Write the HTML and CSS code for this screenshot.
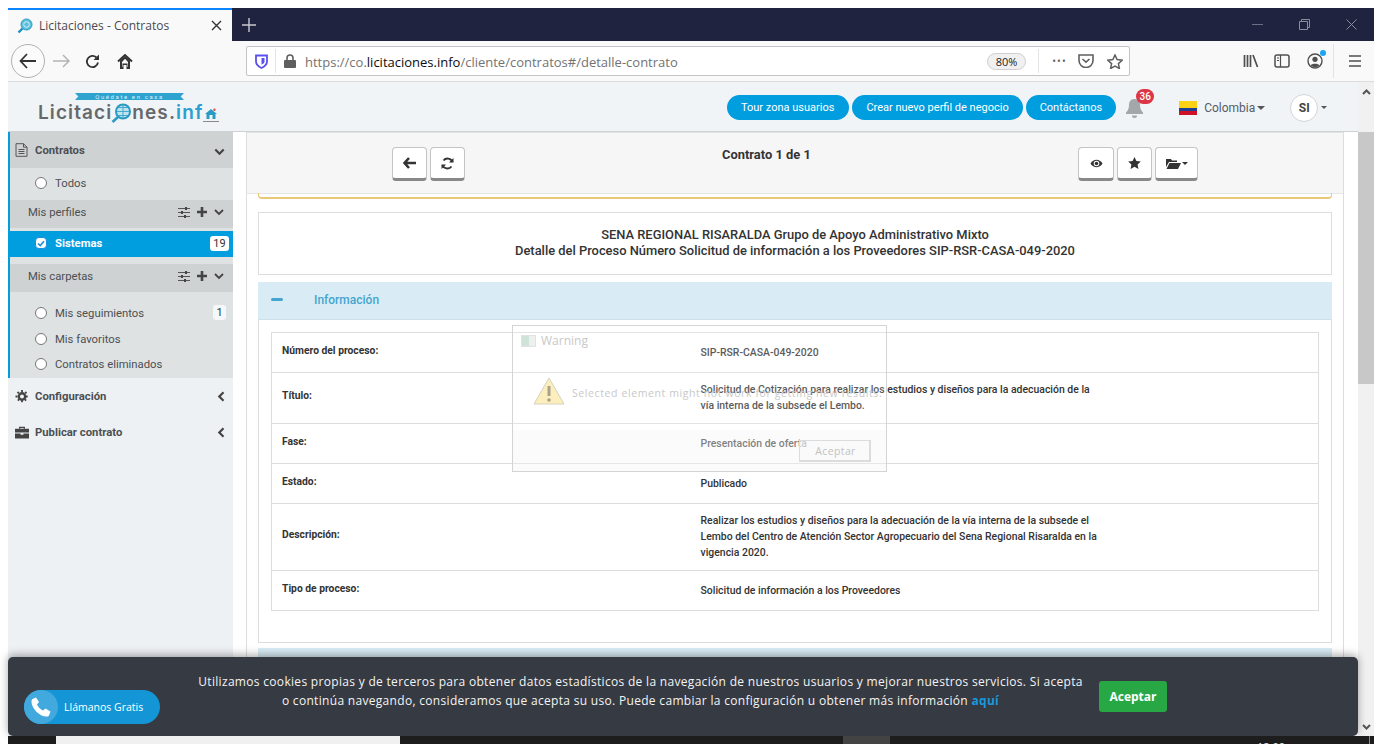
FILE: index.html
```html
<!DOCTYPE html>
<html lang="es">
<head>
  <meta charset="UTF-8" />
  <title>Licitaciones - Contratos</title>
  <link rel="stylesheet" href="styles.css">
</head>
<body>
<div class="window">

  <!-- browser tabs -->
  <div class="tabstrip">
    <div class="tab">
      <svg class="favicon" width="16" height="16" viewBox="0 0 16 16"><circle cx="9.500" cy="6.500" r="5.500" fill="#5cc0dc" stroke="#2a9cc4"/><circle cx="9.500" cy="6.500" r="2.800" fill="none" stroke="#d6f1f8"/><path d="M5.500 10.500 1.500 14.500" stroke="#1f8fc0" stroke-width="2.400"/></svg>
      <span class="tab-title">Licitaciones - Contratos</span>
      <svg class="tab-close" width="11" height="11" viewBox="0 0 11 11"><path d="M1 1l9 9M10 1l-9 9" stroke="#333" stroke-width="1.400" fill="none"/></svg>
    </div>
    <svg class="newtab" width="14" height="14" viewBox="0 0 14 14"><path d="M7 0v14M0 7h14" stroke="#c9c9d0" stroke-width="1.400"/></svg>
    <div class="winctl">
      <svg width="11" height="11" viewBox="0 0 11 11"><path d="M0 5.500h11" stroke="#6b6f85"/></svg>
      <svg width="11" height="11" viewBox="0 0 11 11"><path d="M.5 2.500h8v8h-8zM2.500 2.500v-2h8v8h-2" stroke="#8a8da0" fill="none"/></svg>
      <svg width="11" height="11" viewBox="0 0 11 11"><path d="M.5.500l10 10M10.500.500l-10 10" stroke="#8a8da0" fill="none"/></svg>
    </div>
  </div>

  <!-- browser toolbar -->
  <div class="toolbar">
    <div class="nav-btns">
      <span class="back-btn">
        <svg width="18" height="16" viewBox="0 0 18 16"><path d="M8 1 1.500 8 8 15M2 8h15" stroke="#333" stroke-width="1.800" fill="none"/></svg>
      </span>
      <svg class="fwd" width="17" height="14" viewBox="0 0 17 14"><path d="M10 1l6 6-6 6M16 7H0" stroke="#b4b4b4" stroke-width="1.500" fill="none"/></svg>
      <svg class="reload" width="15" height="15" viewBox="0 0 15 15"><path d="M13 8.500A5.600 5.600 0 1 1 11.400 3.500" stroke="#333" stroke-width="1.800" fill="none"/><path d="M14 0.500v5.500H8.500z" fill="#333"/></svg>
      <svg class="home" width="16" height="15" viewBox="0 0 16 15"><path d="M1 7.500 8 1l7 6.500" stroke="#333" stroke-width="1.900" fill="none"/><path d="M3 6.500 8 2l5 4.500V15H9.500v-4h-3v4H3zM5 8v5h.5V9.500h5V13h.5V8L8 4.800z" fill="#333" fill-rule="evenodd"/></svg>
    </div>
    <div class="urlbar">
      <svg class="shield" width="13" height="15" viewBox="0 0 13 15"><path d="M1 1.500h11v6c0 3-2.500 5-5.500 6.500C3.500 12.500 1 10.500 1 7.500z" fill="none" stroke="#5a4ff0" stroke-width="1.800"/><path d="M6.500 4H9.500v3.500c0 1.500-1.500 2.500-3 3.200z" fill="#5a4ff0"/></svg>
      <span class="url-sep"></span>
      <svg class="lock" width="12" height="14" viewBox="0 0 12 14"><path d="M3 6V4a3 3 0 0 1 6 0v2" stroke="#5f5f60" stroke-width="1.600" fill="none"/><rect y="6" width="12" height="8" rx="1" fill="#5f5f60"/></svg>
      <span class="url">https://co.<b>licitaciones.info</b>/cliente/contratos#/detalle-contrato</span>
      <span class="zoom-pill">80%</span>
      <span class="url-sep sep-right"></span>
      <span class="dots">•••</span>
      <svg class="pocket" width="16" height="14" viewBox="0 0 16 14"><path d="M1 1h14v5.500a7 7 0 0 1-14 0z" stroke="#5f5f60" stroke-width="1.600" fill="none"/><path d="M4.500 5 8 8.200 11.500 5" stroke="#5f5f60" stroke-width="1.600" fill="none"/></svg>
      <svg class="star-o" width="16" height="15" viewBox="0 0 16 15"><path d="M8 1l2.100 4.600 5 .6-3.700 3.400 1 4.900L8 12.100l-4.400 2.400 1-4.900L.9 6.200l5-.6z" stroke="#5f5f60" stroke-width="1.500" fill="none"/></svg>
    </div>
    <div class="tools">
      <svg width="16" height="14" viewBox="0 0 16 14"><path d="M1.500 1v12M4.500 1v12M7.500 1v12M10 1l4.500 12" stroke="#4f4f50" stroke-width="1.700" fill="none"/></svg>
      <svg width="16" height="14" viewBox="0 0 16 14"><rect x="1" y="1" width="14" height="12" rx="2" stroke="#4f4f50" stroke-width="1.500" fill="none"/><path d="M6.500 1v12M3 4h2M3 6.500h2" stroke="#4f4f50" stroke-width="1.200"/></svg>
      <span class="account">
        <svg width="16" height="16" viewBox="0 0 16 16"><circle cx="8" cy="8" r="7" stroke="#4f4f50" stroke-width="1.400" fill="none"/><circle cx="8" cy="6.300" r="2.600" fill="#4f4f50"/><path d="M3.500 12.500c1-2.500 8-2.500 9 0a7 7 0 0 1-9 0z" fill="#4f4f50"/></svg>
        <i class="account-dot"></i>
      </span>
      <span class="tool-sep"></span>
      <svg class="burger" width="12" height="12" viewBox="0 0 12 12"><path d="M0 1h12M0 6h12M0 11h12" stroke="#4f4f50" stroke-width="1.600"/></svg>
    </div>
  </div>

  <div class="page">
    <div class="page-content">

      <header class="site-header">
        <a class="logo">
          <span class="logo-ribbon">Quédate en casa</span>
          <span class="logo-name">Licitaci<svg class="logo-globe" width="22" height="21" viewBox="0 0 22 21"><circle cx="13" cy="8.500" r="7" fill="#bfe4f0" stroke="#2a9cc4" stroke-width="2"/><path d="M6 8.500h14M13 1.500v14M8 4.500h10M8 12.500h10" stroke="#2a9cc4" stroke-width=".8"/><path d="M8 14 2.500 19" stroke="#2a9cc4" stroke-width="2.600"/></svg>nes.<em>inf</em><svg class="logo-house" width="16" height="14" viewBox="0 0 16 14"><path d="M8 1 2 6h1.500v5h9V6H14z" fill="#2a9cc4"/><rect x="6.500" y="7" width="3" height="4" fill="#f1f4f6"/><path d="M0 13.500h16" stroke="#8a8a8a"/><circle cx="11.500" cy="1.800" r="1.200" fill="#d9534f"/></svg></span>
        </a>
        <nav class="header-links">
          <a class="pill">Tour zona usuarios</a>
          <a class="pill">Crear nuevo perfil de negocio</a>
          <a class="pill">Contáctanos</a>
        </nav>
        <span class="bell">
          <svg width="19" height="20" viewBox="0 0 19 20"><path d="M9.500 1c-4 0-5.500 3-5.500 6 0 4-1.500 6-3 7.500v1.500h17v-1.500C16.500 13 15 11 15 7c0-3-1.500-6-5.500-6zM7 17.500a2.500 2.500 0 0 0 5 0z" fill="#a3a7a9"/></svg>
          <span class="bell-count">36</span>
        </span>
        <span class="flag"><i></i></span>
        <span class="country">Colombia</span>
        <i class="caret"></i>
        <span class="avatar">SI</span>
        <i class="caret caret-small"></i>
      </header>

      <div class="page-body">
        <aside class="sidebar">
          <div class="menu-open">
            <div class="menu-head">
              <svg class="menu-icon" width="13" height="14" viewBox="0 0 13 14"><path d="M1 .7h7.500L12 4.200v9.100H1zM8.500.7v3.500H12M3.500 6.500h6M3.500 8.500h6M3.500 10.500h6" stroke="#555" fill="none"/></svg>
              <span>Contratos</span>
              <svg class="chev" width="11" height="8" viewBox="0 0 11 8"><path d="M1.300 1.500 5.500 5.700 9.700 1.500" stroke="#444" stroke-width="2.200" fill="none"/></svg>
            </div>
            <div class="menu-item item-todos"><i class="radio"></i>Todos</div>
            <div class="sub-head">
              <span>Mis perfiles</span>
              <span class="sub-actions">
                <svg width="12" height="11" viewBox="0 0 12 11"><path d="M0 1.500h12M0 5.500h12M0 9.500h12" stroke="#555" stroke-width="1"/><path d="M7 0h2v3H7zM3 4h2v3H3zM6 8h2v3H6z" fill="#444"/></svg>
                <svg width="10" height="10" viewBox="0 0 10 10"><path d="M5 0v10M0 5h10" stroke="#444" stroke-width="2.600"/></svg>
                <svg width="10" height="7" viewBox="0 0 10 7"><path d="M1 1l4 4 4-4" stroke="#444" stroke-width="1.800" fill="none"/></svg>
              </span>
            </div>
            <div class="menu-item item-active">
              <i class="radio radio-on"><svg width="8" height="7" viewBox="0 0 8 7"><path d="M1 3.500 3.200 5.500 7 1.200" stroke="#1a8fdc" stroke-width="1.600" fill="none"/></svg></i>Sistemas<span class="count">19</span>
            </div>
            <div class="sub-head sub-carpetas">
              <span>Mis carpetas</span>
              <span class="sub-actions">
                <svg width="12" height="11" viewBox="0 0 12 11"><path d="M0 1.500h12M0 5.500h12M0 9.500h12" stroke="#555" stroke-width="1"/><path d="M7 0h2v3H7zM3 4h2v3H3zM6 8h2v3H6z" fill="#444"/></svg>
                <svg width="10" height="10" viewBox="0 0 10 10"><path d="M5 0v10M0 5h10" stroke="#444" stroke-width="2.600"/></svg>
                <svg width="10" height="7" viewBox="0 0 10 7"><path d="M1 1l4 4 4-4" stroke="#444" stroke-width="1.800" fill="none"/></svg>
              </span>
            </div>
            <div class="folder-list">
              <div class="menu-item"><i class="radio"></i>Mis seguimientos<span class="count count-light">1</span></div>
              <div class="menu-item"><i class="radio"></i>Mis favoritos</div>
              <div class="menu-item"><i class="radio"></i>Contratos eliminados</div>
            </div>
          </div>
          <div class="menu-closed">
            <svg class="menu-icon" width="13" height="13" viewBox="0 0 13 13"><circle cx="6.500" cy="6.500" r="3.200" fill="none" stroke="#444" stroke-width="2.400"/><path d="M6.500 0v13M0 6.500h13M2 2l9 9M11 2l-9 9" stroke="#444" stroke-width="1.800" stroke-dasharray="2 8.200"/></svg>
            <span>Configuración</span>
            <svg class="chev-left" width="8" height="11" viewBox="0 0 8 11"><path d="M6.500 1.300 2.300 5.500 6.500 9.700" stroke="#444" stroke-width="2.200" fill="none"/></svg>
          </div>
          <div class="menu-closed">
            <svg class="menu-icon" width="15" height="13" viewBox="0 0 15 13"><path d="M5 2.500V1h5v1.500" stroke="#444" stroke-width="1.400" fill="none"/><path d="M0 2.500h15V6.500H0zM0 7.500h6v1.500h3V7.500h6V13H0z" fill="#444"/></svg>
            <span>Publicar contrato</span>
            <svg class="chev-left" width="8" height="11" viewBox="0 0 8 11"><path d="M6.500 1.300 2.300 5.500 6.500 9.700" stroke="#444" stroke-width="2.200" fill="none"/></svg>
          </div>
        </aside>

        <main class="main">
          <div class="detail">
            <div class="detail-bar">
              <div class="btn-group">
                <button class="bar-btn"><svg width="13" height="12" viewBox="0 0 13 12"><path d="M6 1 1.500 6 6 11M2 6h11" stroke="#333" stroke-width="2.600" fill="none"/></svg></button>
                <button class="bar-btn"><svg width="13" height="13" viewBox="0 0 13 13"><path d="M11.500 5A5.200 5.200 0 0 0 2.500 3.500M1.500 8a5.200 5.200 0 0 0 9 1.500" stroke="#333" stroke-width="1.900" fill="none"/><path d="M12.500 1v4.500H8zM.5 12V7.500H5z" fill="#333"/></svg></button>
              </div>
              <strong class="bar-title">Contrato 1 de 1</strong>
              <div class="btn-group bar-right">
                <button class="bar-btn btn-eye"><svg width="13" height="9" viewBox="0 0 13 9"><path d="M.5 4.500C3.500-.5 9.500-.5 12.500 4.500 9.500 9.500 3.500 9.500.5 4.500z" fill="#333"/><circle cx="6.500" cy="4.500" r="2.800" fill="#fff"/><circle cx="6.500" cy="4.500" r="1.800" fill="#333"/></svg></button>
                <button class="bar-btn"><svg width="13" height="12" viewBox="0 0 13 12"><path d="M6.500 0l1.900 4 4.400.5-3.200 3 .8 4.400-3.900-2.100-3.900 2.100.8-4.400-3.200-3 4.400-.5z" fill="#333"/></svg></button>
                <button class="bar-btn btn-folder"><svg width="15" height="11" viewBox="0 0 15 11"><path d="M0 1h5l1 1.500h5V4H3L0 9z" fill="#333"/><path d="M3.500 5H15l-3 6H.5z" fill="#333"/></svg><i class="caret caret-dark"></i></button>
              </div>
            </div>
            <div class="alert-end"></div>

            <div class="title-box">
              <p>SENA REGIONAL RISARALDA Grupo de Apoyo Administrativo Mixto</p>
              <p>Detalle del Proceso Número Solicitud de información a los Proveedores SIP-RSR-CASA-049-2020</p>
            </div>

            <section class="accordion">
              <div class="acc-head"><i class="acc-minus"></i><span>Información</span></div>
              <div class="acc-body">
                <table class="info-table">
                  <tr class="row-1"><th>Número del proceso:</th><td>SIP-RSR-CASA-049-2020</td></tr>
                  <tr class="row-2"><th>Título:</th><td>Solicitud de Cotización para realizar los estudios y diseños para la adecuación de la vía interna de la subsede el Lembo.</td></tr>
                  <tr class="row-1"><th>Fase:</th><td>Presentación de oferta</td></tr>
                  <tr class="row-1"><th>Estado:</th><td>Publicado</td></tr>
                  <tr class="row-3"><th>Descripción:</th><td>Realizar los estudios y diseños para la adecuación de la vía interna de la subsede el Lembo del Centro de Atención Sector Agropecuario del Sena Regional Risaralda en la vigencia 2020.</td></tr>
                  <tr class="row-1"><th>Tipo de proceso:</th><td>Solicitud de información a los Proveedores</td></tr>
                </table>
              </div>
            </section>
            <div class="acc-head acc-next"></div>
          </div>
        </main>
      </div>
    </div>

    <div class="scrollbar">
      <svg width="9" height="6" viewBox="0 0 9 6"><path d="M1 5l3.500-3.500L8 5" stroke="#555" stroke-width="2" fill="none"/></svg>
      <div class="scroll-thumb"></div>
      <svg class="scroll-down" width="9" height="6" viewBox="0 0 9 6"><path d="M1 1l3.500 3.500L8 1" stroke="#555" stroke-width="2" fill="none"/></svg>
    </div>

    <!-- fading warning dialog -->
    <div class="warning">
      <div class="warning-title"><i class="warning-appicon"></i>Warning</div>
      <div class="warning-msg">
        <svg width="32" height="28" viewBox="0 0 32 28"><path d="M16 1 31 27H1z" fill="#fbe9a8" stroke="#c8c2a8"/><path d="M16 9v10" stroke="#8b8468" stroke-width="3"/><circle cx="16" cy="23" r="1.800" fill="#8b8468"/></svg>
        <span>Selected element might not work for getting new results.</span>
      </div>
      <div class="warning-foot"><button class="warning-btn">Aceptar</button></div>
    </div>

    <!-- cookie notice -->
    <div class="cookies">
      <p>Utilizamos cookies propias y de terceros para obtener datos estadísticos de la navegación de nuestros usuarios y mejorar nuestros servicios. Si acepta<br>o continúa navegando, consideramos que acepta su uso. Puede cambiar la configuración u obtener más información <a>aquí</a></p>
      <button class="cookie-ok">Aceptar</button>
    </div>
    <a class="call-pill">
      <span class="call-circle"><svg width="20" height="20" viewBox="0 0 20 20"><path d="M5 0.500 8 5 6 7.500c1 2.500 3.500 5 6 6l2.500-2 5 3-1.500 4c-.5 1-1.500 1-2.500 1C8.500 19.500.5 11.500.5 4.500c0-1 .5-2 1-2.500z" fill="#fff"/></svg></span>
      Llámanos Gratis
    </a>
  </div>

  <div class="taskbar">
    <span class="task-app"></span>
    <span class="task-active"></span>
    <span class="task-clock">12:00</span>
    <span class="task-edge"></span>
  </div>
</div>
</body>
</html>
```

FILE: styles.css
```css
* {
  box-sizing: border-box;
}

html, body {
  height: 744px;
  overflow: hidden;
}

body {
  margin: 0;
  padding: 8px 8px 0;
  background: #fff;
  font-family: Roboto, 'Liberation Sans', sans-serif;
  color: #333;
}

svg {
  display: block;
  flex: none;
}

.window {
  width: 1366px;
  height: 736px;
  display: flex;
  flex-direction: column;
}

/* Browser chrome */
.tabstrip {
  height: 33px;
  background: #20233f;
  display: flex;
  align-items: center;
  flex: none;
}

.tab {
  width: 224px;
  height: 33px;
  background: #f9f9fa;
  border-top: 2px solid #0a84ff;
  display: flex;
  align-items: center;
  padding: 0 10px 0 9px;
  font-family: 'Open Sans', sans-serif;
  font-size: 12px;
  color: #4a4a4f;
}

.tab-title {
  margin-left: 6px;
  flex: 1;
}

.newtab {
  margin-left: 10px;
}

.winctl {
  margin-left: auto;
  display: flex;
  gap: 36px;
  padding-right: 17px;
}

.toolbar {
  height: 41px;
  background: #f9f9fa;
  border-bottom: 1px solid #dcdcde;
  display: flex;
  align-items: center;
  flex: none;
}

.nav-btns {
  width: 238px;
  display: flex;
  align-items: center;
  padding-left: 3px;
}

.back-btn {
  width: 34px;
  height: 34px;
  border: 1px solid #b1b1b3;
  border-radius: 50%;
  background: #fbfbfb;
  display: flex;
  align-items: center;
  justify-content: center;
}

.fwd {
  margin-left: 8px;
}

.reload {
  margin-left: 15px;
}

.home {
  margin-left: 17px;
}

.urlbar {
  width: 884px;
  height: 30px;
  background: #fff;
  border: 1px solid #c4c4c6;
  border-radius: 2px;
  display: flex;
  align-items: center;
  padding-left: 8px;
  font-family: 'Open Sans', sans-serif;
  font-size: 13px;
  color: #737373;
}

.url-sep {
  width: 1px;
  height: 24px;
  background: #e4e4e5;
  margin: 0 8px 0 7px;
}

.url {
  margin-left: 9px;
  padding-top: 1px;
  flex: 1;
  white-space: nowrap;
}

.url b {
  font-weight: 400;
  color: #0c0c0d;
}

.zoom-pill {
  width: 39px;
  height: 17px;
  margin-left: -1px;
  border: 1px solid #cfcfd1;
  border-radius: 9px;
  background: #f0f0f1;
  font-size: 11px;
  line-height: 15px;
  text-align: center;
  color: #222;
}

.sep-right {
  margin: 0 12px;
}

.dots {
  font-size: 10px;
  letter-spacing: 1px;
  color: #5f5f60;
  width: 17px;
  text-align: center;
}

.pocket {
  margin-left: 10px;
}

.star-o {
  margin: 0 6px 0 13px;
}

.tools {
  flex: 1;
  display: flex;
  align-items: center;
  padding-left: 113px;
}

.tools > svg:nth-child(2) {
  margin-left: 15px;
}

.account {
  position: relative;
  margin-left: 17px;
}

.account-dot {
  position: absolute;
  top: -3px;
  right: -3px;
  width: 6px;
  height: 6px;
  border-radius: 50%;
  background: #1aa6f2;
}

.tool-sep {
  width: 1px;
  height: 34px;
  background: #e2e2e3;
  margin: 0 15px 0 10px;
}

/* Page */
.page {
  position: relative;
  flex: 1;
  min-height: 0;
  display: flex;
}

.page-content {
  width: 1350px;
  display: flex;
  flex-direction: column;
}

.site-header {
  height: 50px;
  padding-top: 2px;
  background: #f1f4f6;
  border-bottom: 1px solid #cfd2d2;
  display: flex;
  align-items: center;
  flex: none;
}

.logo {
  width: 719px;
  padding: 9px 0 0 30px;
  align-self: flex-start;
  display: flex;
  flex-direction: column;
}

.logo-ribbon {
  width: 109px;
  height: 7px;
  margin-left: 37px;
  background: #2ea3cf;
  color: #d8f0f8;
  font-size: 6px;
  line-height: 7px;
  letter-spacing: 1.600px;
  text-align: center;
  overflow: hidden;
  clip-path: polygon(0 0, 100% 0, 97% 50%, 100% 100%, 0 100%, 3% 50%);
}

.logo-name {
  display: flex;
  align-items: center;
  height: 23px;
  margin-top: 1px;
  font-family: Inter, 'Liberation Sans', sans-serif;
  font-weight: 600;
  font-size: 19px;
  letter-spacing: 1.100px;
  color: #66696c;
}

.logo-name em {
  font-style: normal;
  color: #2a9fd0;
}

.logo-globe {
  margin: 2px 0 0 -2px;
}

.logo-house {
  margin-top: 4px;
}

.header-links {
  display: flex;
  gap: 3px;
}

.pill {
  height: 25px;
  padding: 0 14px;
  border-radius: 13px;
  background: #009ddf;
  color: #fff;
  font-size: 11px;
  line-height: 25px;
  white-space: nowrap;
}

.pill:first-child {
  padding-right: 15px;
}

.bell {
  position: relative;
  margin-left: 9px;
}

.bell-count {
  position: absolute;
  top: -9px;
  left: 11px;
  width: 18px;
  height: 15px;
  border-radius: 8px;
  background: #dc3545;
  color: #fff;
  font-size: 10px;
  font-weight: 500;
  line-height: 15px;
  text-align: center;
}

.flag {
  width: 18px;
  height: 14px;
  margin-left: 35px;
  background: #fcd116;
  overflow: hidden;
}

.flag i {
  display: block;
  height: 7px;
  margin-top: 7px;
  background: linear-gradient(#1f3f95 50%, #ce1126 50%);
}

.country {
  margin-left: 7px;
  font-size: 12px;
  color: #555c66;
}

.caret {
  display: inline-block;
  width: 0;
  height: 0;
  margin-left: 2px;
  border-top: 4px solid #555;
  border-left: 4px solid transparent;
  border-right: 4px solid transparent;
}

.avatar {
  width: 28px;
  height: 28px;
  margin-left: 25px;
  border: 1px solid #d2d5d8;
  border-radius: 50%;
  background: #fff;
  font-size: 12px;
  font-weight: 700;
  line-height: 26px;
  text-align: center;
  color: #444;
}

.caret-small {
  margin-left: 3px;
  border-top-width: 3px;
  border-left-width: 3px;
  border-right-width: 3px;
}

.page-body {
  flex: 1;
  min-height: 0;
  display: flex;
}

/* Sidebar */
.sidebar {
  width: 225px;
  background: #eef1f4;
  flex: none;
  font-size: 11.300px;
  color: #4c4f52;
}

.menu-open {
  border-left: 2px solid #009ddf;
  background: #dfe2e2;
}

.menu-head {
  height: 36px;
  background: #cfd2d2;
  display: flex;
  align-items: center;
  padding: 0 8px 0 5px;
  font-weight: 700;
}

.menu-icon {
  margin-right: 7px;
}

.menu-head span {
  flex: 1;
}

.chev {
  margin-top: 3px;
}

.menu-item {
  height: 26px;
  display: flex;
  align-items: center;
  padding-left: 25px;
  position: relative;
}

.item-todos {
  height: 32px;
  padding-bottom: 2px;
}

.radio {
  width: 12px;
  height: 12px;
  margin-right: 8px;
  border: 1px solid #777;
  border-radius: 50%;
  background: #fff;
  flex: none;
}

.sub-head {
  height: 28px;
  background: #cfd2d2;
  display: flex;
  align-items: center;
  justify-content: space-between;
  padding: 0 9px 4px 18px;
  margin-bottom: 3px;
}

.sub-carpetas {
  margin: 7px 0 8px;
}

.sub-actions {
  display: flex;
  align-items: center;
  gap: 7px;
}

.item-active {
  background: #009ddf;
  color: #fff;
  font-weight: 700;
  padding-bottom: 2px;
}

.radio-on {
  border-color: #1a8fdc;
  border-radius: 4px;
  display: flex;
  align-items: center;
  justify-content: center;
}

.count {
  position: absolute;
  right: 4px;
  top: 5px;
  width: 19px;
  height: 15px;
  border-radius: 3px;
  background: #fff;
  color: #333;
  font-weight: 400;
  font-size: 11px;
  line-height: 15px;
  text-align: center;
}

.count-light {
  width: 13px;
  right: 7px;
  background: #f6f7f8;
}

.folder-list .menu-item:last-child {
  padding-bottom: 2px;
}

.menu-closed {
  height: 36px;
  display: flex;
  align-items: center;
  padding: 0 8px 0 7px;
  font-weight: 700;
}

.menu-closed span {
  flex: 1;
}

.menu-closed .menu-icon {
  margin-right: 6px;
  width: 14px;
}

/* Main column */
.main {
  flex: 1;
  min-width: 0;
  background: #fff;
  padding: 0 14px 0 13px;
  overflow: hidden;
}

.detail {
  height: 100%;
  border-left: 1px solid #ddd;
  border-right: 1px solid #ddd;
}

.detail-bar {
  height: 62px;
  background: #f6f6f6;
  border-top: 1px solid #e0e3e3;
  border-bottom: 1px solid #e6e6e6;
  display: flex;
  align-items: flex-start;
  padding: 14px 146px 0 145px;
}

.btn-group {
  display: flex;
  gap: 3px;
}

.bar-right {
  position: relative;
  left: 1px;
  margin-left: auto;
}

.bar-btn {
  width: 35px;
  height: 34px;
  padding: 0;
  border: 1px solid #c4c4c4;
  border-bottom: 3px solid #888;
  border-radius: 4px;
  background: #fff;
  display: flex;
  align-items: center;
  justify-content: center;
}

.btn-eye {
  width: 36px;
}

.btn-folder {
  width: 43px;
  gap: 1px;
}

.caret-dark {
  margin-left: 0;
  border-top: 3px solid #333;
  border-left: 3px solid transparent;
  border-right: 3px solid transparent;
}

.bar-title {
  margin: 0 0 0 257px;
  font-size: 12.900px;
  font-weight: 700;
  color: #333;
}

.alert-end {
  height: 6px;
  margin: -1px 11px 0;
  border: 1px solid #e9c878;
  border-top: 0;
  border-width: 0 1px 2px;
  border-radius: 0 0 4px 4px;
}

.title-box {
  height: 63px;
  margin: 13px 11px 7px;
  border: 1px solid #ddd;
  padding-top: 14px;
  text-align: center;
  font-size: 12.900px;
  font-weight: 500;
  line-height: 16px;
  color: #333;
}

.title-box p {
  margin: 0;
}

.accordion {
  margin: 0 11px 5px;
}

.acc-head {
  height: 38px;
  background: #d9ecf5;
  border-bottom: 1px solid #cfe0e8;
  display: flex;
  align-items: center;
  padding-bottom: 2px;
  font-size: 12px;
  font-weight: 500;
  color: #45a5cf;
}

.acc-minus {
  width: 12px;
  height: 3px;
  margin: 0 31px 0 13px;
  border-radius: 2px;
  background: #45a5cf;
}

.acc-next {
  margin: 0 11px;
  height: 12px;
}

.acc-body {
  height: 323px;
  border: 1px solid #ddd;
  border-top: 0;
  padding: 12px;
}

.info-table {
  width: 100%;
  border-collapse: collapse;
  border: 1px solid #ddd;
  font-size: 10.450px;
  font-weight: 500;
  color: #333;
}

.info-table tr {
  border-top: 1px solid #ddd;
}

.info-table th {
  width: 429px;
  padding: 0 10px 5px;
  text-align: left;
  font-weight: 700;
  font-size: 10.300px;
}

.info-table td {
  padding: 0 220px 0 0;
  line-height: 16px;
}

.row-1 {
  height: 40px;
}

.row-2 {
  height: 51px;
}

.row-3 {
  height: 67px;
}

/* Scrollbar */
.scrollbar {
  width: 16px;
  background: #f1f1f1;
  display: flex;
  flex-direction: column;
  align-items: center;
  padding-top: 7px;
}

.scroll-thumb {
  width: 16px;
  height: 252px;
  margin-top: 37px;
  background: #c8c8c8;
}

.scroll-down {
  margin-top: auto;
  margin-bottom: 6px;
}

/* Warning dialog, caught half faded */
.warning {
  position: absolute;
  left: 504px;
  top: 243px;
  width: 375px;
  height: 147px;
  border: 1px solid #d4d4d4;
  background: rgba(255, 255, 255, 0.2);
  font-family: 'Open Sans', sans-serif;
  display: flex;
  flex-direction: column;
}

.warning-title {
  height: 29px;
  display: flex;
  align-items: center;
  padding-left: 8px;
  font-size: 12px;
  color: #c8c8c8;
}

.warning-appicon {
  width: 15px;
  height: 12px;
  margin-right: 5px;
  background: linear-gradient(90deg, #cfe3d8 55%, #eef0f0 55%);
  border: 1px solid #e2e2e2;
}

.warning-msg {
  height: 75px;
  display: flex;
  align-items: center;
  padding: 0 0 0 20px;
  font-size: 10.500px;
  letter-spacing: 0.600px;
  color: #c9c9c9;
  white-space: nowrap;
}

.warning-msg svg {
  opacity: 0.75;
  margin: -3px 7px 0 0;
}

.warning-foot {
  flex: 1;
  background: rgba(240, 240, 240, 0.25);
  display: flex;
  justify-content: flex-end;
  align-items: flex-start;
  padding: 10px 15px 0 0;
}

.warning-btn {
  width: 72px;
  height: 22px;
  padding: 0 0 0 2px;
  border: 1px solid #dcdcdc;
  border-width: 1px 2px 2px 1px;
  background: rgba(250, 250, 250, 0.6);
  font-family: inherit;
  font-size: 10.500px;
  letter-spacing: 0.400px;
  color: #c2c2c2;
}

/* Cookie notice */
.cookies {
  position: absolute;
  left: 0;
  bottom: 0;
  width: 1350px;
  height: 79px;
  background: #363a42;
  border-radius: 5px;
  box-shadow: 0 -2px 8px rgba(0, 0, 0, 0.35);
  display: flex;
  align-items: flex-start;
  padding: 15px 0 0 190px;
  color: #f4f4f4;
  font-family: 'Open Sans', sans-serif;
  font-size: 12px;
  line-height: 19px;
  letter-spacing: 0.310px;
}

.cookies p {
  width: 885px;
  margin: 0;
  text-align: center;
  white-space: nowrap;
}

.cookies a {
  color: #1799dc;
  font-weight: 700;
}

.cookie-ok {
  width: 68px;
  height: 31px;
  margin: 9px 0 0 16px;
  border: 0;
  border-radius: 3px;
  background: #28a745;
  color: #fff;
  font-family: inherit;
  font-size: 12px;
  font-weight: 700;
}

.call-pill {
  position: absolute;
  left: 16px;
  bottom: 12px;
  width: 136px;
  height: 34px;
  border-radius: 17px;
  background: #1496d6;
  color: #fff;
  display: flex;
  align-items: center;
  gap: 6px;
  font-family: 'Open Sans', sans-serif;
  font-size: 10.500px;
}

.call-circle {
  width: 34px;
  height: 34px;
  border-radius: 50%;
  background: #42a9de;
  display: flex;
  align-items: center;
  justify-content: center;
}

/* Windows taskbar, cut off at the bottom */
.taskbar {
  position: relative;
  height: 8px;
  flex: none;
  background: #1d1d1d;
  overflow: hidden;
  display: flex;
}

.task-app {
  width: 344px;
  margin-left: 48px;
  background: #f0f0f0;
}

.task-active {
  width: 47px;
  margin-left: 443px;
  background: #434343;
}

.task-clock {
  margin-left: 367px;
  margin-top: 3px;
  font-family: 'Open Sans', sans-serif;
  font-size: 11px;
  color: #eee;
}

.task-edge {
  width: 1px;
  margin: 0 4px 0 auto;
  background: #8a8a8a;
}
```
